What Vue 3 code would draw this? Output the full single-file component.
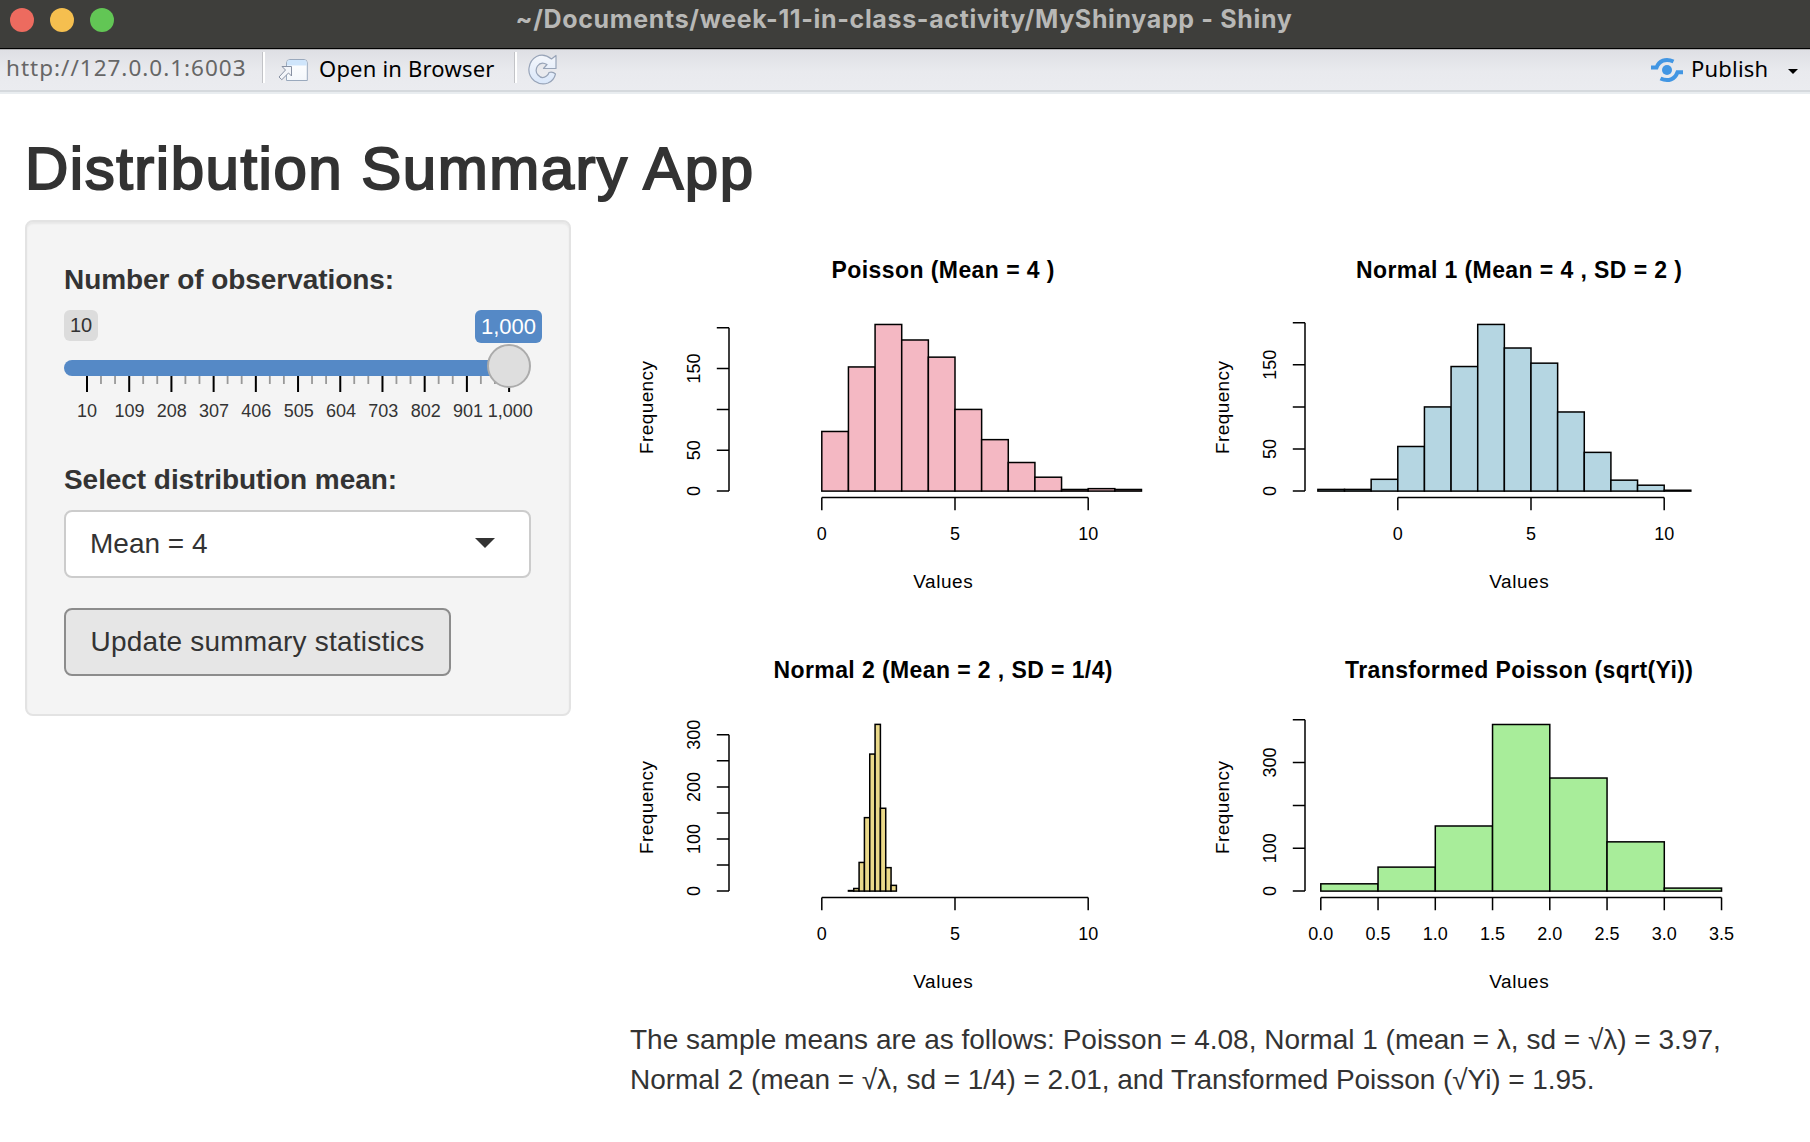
<script setup>
const pinkBars = [73, 152, 204, 185, 164, 100, 63, 35, 17, 2, 3, 2]
const blueBars = [2, 2, 14, 53, 100, 148, 198, 170, 152, 94, 46, 13, 7, 1]
const khakiBars = [1, 5, 55, 141, 263, 320, 159, 45, 11]
const greenBars = [17, 56, 152, 389, 264, 115, 7]
const BASE = 271.1

const wide = { x0: 191.8, unit: 26.64, xTicks: [0, 5, 10], digits: 0 }

const plots = [
  { title: 'Poisson (Mean = 4 )', length: 223, color: '#f4b8c3', ...wide, start: 0, step: 1, counts: pinkBars, scale: 0.8168, yTicks: [0, 50, 100, 150, 200], yLabels: [0, 50, 150] },
  { title: 'Normal 1 (Mean = 4 , SD = 2 )', length: 326, color: '#b5d6e2', ...wide, start: -3, step: 1, counts: blueBars, scale: 0.8417, yTicks: [0, 50, 100, 150, 200], yLabels: [0, 50, 150] },
  { title: 'Normal 2 (Mean = 2 , SD = 1/4)', length: 339, color: '#ead98a', ...wide, start: 1, step: 0.2, counts: khakiBars, scale: 0.521, yTicks: [0, 50, 100, 150, 200, 250, 300], yLabels: [0, 100, 200, 300] },
  { title: 'Transformed Poisson (sqrt(Yi))', length: 348, color: '#a8ed9a', x0: 114.8, unit: 114.5, xTicks: [0, 0.5, 1, 1.5, 2, 2.5, 3, 3.5], digits: 1, start: 0, step: 0.5, counts: greenBars, scale: 0.4283, yTicks: [0, 100, 200, 300, 400], yLabels: [0, 100, 300] },
]

const xAt = (p, v) => p.x0 + v * p.unit
const yAt = (p, v) => BASE - v * p.scale

const yAxis = (p) =>
  `M99 ${BASE}V${yAt(p, p.yTicks[p.yTicks.length - 1])}` + p.yTicks.map((t) => `M99 ${yAt(p, t)}H86.8`).join('')
const xAxis = (p) =>
  `M${xAt(p, p.xTicks[0])} 277.6H${xAt(p, p.xTicks[p.xTicks.length - 1])}` + p.xTicks.map((t) => `M${xAt(p, t)} 277.6V290.3`).join('')

const sliderLabels = ['10', '109', '208', '307', '406', '505', '604', '703', '802', '901', '1,000']
const tickX = (i) => 22.8 + i * 14.07
</script>

<template>
  <div class="window">
    <header class="titlebar">
      <div class="lights"><i class="red"></i><i class="yellow"></i><i class="green"></i></div>
      <div class="caption"><span>~/Documents/week-11-in-class-activity/MyShinyapp - Shiny</span></div>
    </header>

    <nav class="toolbar">
      <span class="url">http://127.0.0.1:6003</span>
      <i class="sep"></i>
      <svg class="open-icon" width="30" height="26" viewBox="0 0 30 26">
        <defs>
          <linearGradient id="pane" x1="0" y1="0" x2="0" y2="1"><stop offset="0" stop-color="#fff" /><stop offset="1" stop-color="#f3f7fb" /></linearGradient>
        </defs>
        <path d="M8.500 22.500V5Q8.500 1.500 12 1.500H26Q29.300 1.500 29.300 5V22.500Z" fill="url(#pane)" stroke="#9aa9bd" stroke-width="1" />
        <path d="M9 7.500V5Q9 2 12 2H26Q28.800 2 28.800 5V7.500Z" fill="#cfe5fb" />
        <path d="M4 8.500H13.500V18L10.500 15L3.800 21.700L1 19L7.500 12Z" fill="#f3f5f9" stroke="#8790a2" stroke-width="1" />
      </svg>
      <span class="open-text">Open in Browser</span>
      <i class="sep"></i>
      <svg class="refresh-icon" width="30" height="31" viewBox="0 0 30 31">
        <defs>
          <linearGradient id="ref" x1="0" y1="0" x2="0" y2="1"><stop offset="0" stop-color="#f4f6fb" /><stop offset="1" stop-color="#d9e7fa" /></linearGradient>
        </defs>
        <path d="M28 1.500V14.500H15.500L19 10.500Q13 7 9.500 12Q6.500 17 10 21Q14 25.500 18.500 22Q20.500 20.500 21 18.500Q25 17.500 27.500 20Q26 26.500 20 29Q13 31.500 6.500 27Q0 21.500 1 14Q2 6 8.500 2.500Q16-1 23.500 5Z" fill="url(#ref)" stroke="#98a4b8" stroke-width="1.200" stroke-linejoin="round" />
      </svg>
      <div class="publish">
        <svg width="32" height="26" viewBox="0 0 32 26" fill="none" stroke="#4296e3" stroke-width="4">
          <circle cx="16" cy="13" r="5" fill="#4296e3" stroke="none" />
          <path d="M0 10.600H5.500C8 4 14.500 0.800 22.500 4.500" />
          <path d="M32 15.200H26.500C24 22 17.500 25.200 9.500 21.500" />
        </svg>
        <span class="publish-text">Publish</span>
        <i class="caret"></i>
      </div>
    </nav>

    <main class="page">
      <h2>Distribution Summary App</h2>
      <div class="row">
        <aside class="well">
          <label>Number of observations:</label>
          <div class="slider">
            <div class="bubbles"><span class="min">10</span><span class="single">1,000</span></div>
            <div class="track"></div>
            <svg class="grid" width="490" height="50" viewBox="0 0 490 50">
              <template v-for="i in 31" :key="i">
                <rect v-if="(i - 1) % 3 === 0" :x="tickX(i - 1) - 0.8" y="0" width="2" height="16" fill="#000" />
                <rect v-else :x="tickX(i - 1) - 0.8" y="0" width="1.800" height="8" fill="#999" />
              </template>
              <text v-for="(l, i) in sliderLabels" :key="l" :x="23.100 + i * 42.320" y="40.700" text-anchor="middle">{{ l }}</text>
            </svg>
            <i class="handle"></i>
          </div>
          <label>Select distribution mean:</label>
          <div class="select"><span>Mean = 4</span><i></i></div>
          <button type="button">Update summary statistics</button>
        </aside>

        <section class="results">
          <div class="plots">
            <svg v-for="p in plots" :key="p.title" class="plot" viewBox="0 0 576.4 400">
              <text class="title" x="313" y="57.700" text-anchor="middle" :textLength="p.length">{{ p.title }}</text>
              <g :fill="p.color" stroke="#000" stroke-width="1.500">
                <rect v-for="(c, i) in p.counts" :key="i" :x="xAt(p, p.start + i * p.step)" :y="yAt(p, c)" :width="p.step * p.unit" :height="c * p.scale" />
              </g>
              <path :d="yAxis(p)" class="axis" />
              <path :d="xAxis(p)" class="axis" />
              <text v-for="t in p.xTicks" :key="'x' + t" :x="xAt(p, t)" y="320.400" text-anchor="middle">{{ t.toFixed(p.digits) }}</text>
              <text v-for="t in p.yLabels" :key="'y' + t" :transform="`translate(70.300 ${yAt(p, t)}) rotate(-90)`" text-anchor="middle">{{ t }}</text>
              <text class="name" transform="translate(22.900 187.500) rotate(-90)" text-anchor="middle" textLength="93">Frequency</text>
              <text class="name" x="313" y="368.200" text-anchor="middle" textLength="59.500">Values</text>
            </svg>
          </div>
          <p>The sample means are as follows: Poisson = 4.08, Normal 1 (mean = λ, sd = √λ) = 3.97,<br /><span class="second-line">Normal 2 (mean = √λ, sd = 1/4) = 2.01, and Transformed Poisson (√Yi) = 1.95.</span></p>
        </section>
      </div>
    </main>
  </div>
</template>

<style>
body {
  margin: 0;
  background: #fff;
}
</style>

<style scoped>
.window {
  width: 1810px;
  height: 1142px;
  overflow: hidden;
  background: #fff;
  color: #333;
  font-family: "Liberation Sans", Arial, sans-serif;
  font-size: 28px;
  line-height: 40px;
}
.window * {
  box-sizing: border-box;
}
.titlebar {
  display: flex;
  height: 50px;
  background: #3e3e3b;
  border-bottom: 1px solid #b4b4b6;
  box-shadow: inset 0 -1px #000;
}
.lights {
  display: flex;
  gap: 16px;
  padding: 8px 0 0 10px;
  width: 200px;
}
.lights i {
  width: 24px;
  height: 24px;
  border-radius: 50%;
}
.red { background: #ed6b5f; }
.yellow { background: #f5bf4f; }
.green { background: #62c655; }
.caption {
  width: 1408px;
  text-align: center;
  font: 700 25px/38px Inter, sans-serif;
  letter-spacing: 0.65px;
  color: #b8b8b6;
  white-space: nowrap;
}
.toolbar {
  display: flex;
  align-items: flex-start;
  height: 44px;
  background: linear-gradient(#dedfe4, #e9eaee 50%, #ebecf0);
  border-bottom: 2px solid #e9edf0;
  box-shadow: inset 0 -2px #d5d9dd;
  font: 22px/36px "Noto Sans", sans-serif;
  color: #000;
  white-space: nowrap;
}
.url {
  width: 262px;
  padding-left: 6px;
  color: #666;
  font-size: 22.5px;
  letter-spacing: 1px;
}
.sep {
  width: 3px;
  height: 31px;
  margin-top: 2px;
  background: linear-gradient(90deg, #c2c3c7 50%, #fff 50%);
}
.open-icon {
  margin: 8px 0 0 13px;
}
.open-text {
  width: 195px;
  margin-left: 11px;
  letter-spacing: 0.2px;
}
.refresh-icon {
  margin: 4px 0 0 11px;
}
.publish {
  display: flex;
  margin-left: auto;
  padding-right: 12px;
}
.publish svg {
  margin: 7px 8px 0 0;
}
.publish-text {
  width: 97px;
  letter-spacing: 0.2px;
}
.caret {
  width: 0;
  height: 0;
  margin-top: 19px;
  border: 5px solid transparent;
  border-top-color: #000;
  border-bottom: 0;
}
.page {
  padding: 42px 27px 0 25px;
}
h2 {
  margin: 0 0 18px;
  font-size: 60px;
  line-height: 66px;
  font-weight: 400;
  letter-spacing: 1.5px;
  -webkit-text-stroke: 2px #333;
  white-space: nowrap;
}
.row {
  display: flex;
  gap: 59px;
}
.well {
  width: 546px;
  height: 496px;
  padding: 38px 37px;
  background: #f4f4f4;
  border: 2px solid #e3e3e3;
  border-radius: 8px;
  box-shadow: inset 0 2px 2px rgba(0, 0, 0, 0.05);
}
label {
  display: block;
  height: 50px;
  font-weight: 700;
  letter-spacing: -0.06px;
  white-space: nowrap;
}
.slider {
  position: relative;
  width: 490px;
  height: 150px;
}
.bubbles {
  display: flex;
  justify-content: space-between;
  width: 478px;
  height: 50px;
}
.min {
  height: 31px;
  width: 34px;
  border-radius: 6px;
  background: #dcdcdc;
  font-size: 20px;
  line-height: 31px;
  text-align: center;
}
.single {
  width: 67px;
  height: 33px;
  border-radius: 6px;
  background: #5589c6;
  color: #fff;
  font-size: 22px;
  line-height: 33px;
  text-align: center;
}
.track {
  width: 466px;
  height: 16px;
  border-radius: 16px;
  background: #5589c6;
}
.grid {
  display: block;
}
.grid text {
  font-size: 18px;
  fill: #333;
}
.handle {
  position: absolute;
  left: 423px;
  top: 34px;
  width: 44px;
  height: 44px;
  border: 2px solid #ababab;
  border-radius: 50%;
  background: #dedede;
}
.select {
  display: flex;
  align-items: center;
  justify-content: space-between;
  width: 467px;
  height: 68px;
  padding: 0 34px 0 24px;
  border: 2px solid #ccc;
  border-radius: 8px;
  background: #fff;
}
.select i {
  border: 10px solid transparent;
  border-top-color: #333;
  border-bottom: 0;
  margin-bottom: 2px;
}
button {
  display: block;
  width: 387px;
  height: 68px;
  margin-top: 30px;
  padding: 0;
  border: 2px solid #8c8c8c;
  border-radius: 8px;
  background: #e6e6e6;
  color: #333;
  font: 28px/40px "Liberation Sans", Arial, sans-serif;
  letter-spacing: 0.22px;
  white-space: nowrap;
}
.results {
  width: 1153px;
}
.plots {
  display: grid;
  grid-template-columns: 576.4px 576.4px;
}
.plot {
  display: block;
  width: 576.4px;
  height: 400px;
}
.plot text {
  font-size: 18px;
  fill: #000;
}
.plot .name {
  font-size: 19px;
}
.plot .title {
  font-size: 23px;
  font-weight: 700;
  white-space: pre;
}
.axis {
  fill: none;
  stroke: #000;
  stroke-width: 1.5;
}
p {
  margin: 0;
  white-space: nowrap;
}
.second-line {
  letter-spacing: -0.05px;
}
</style>
